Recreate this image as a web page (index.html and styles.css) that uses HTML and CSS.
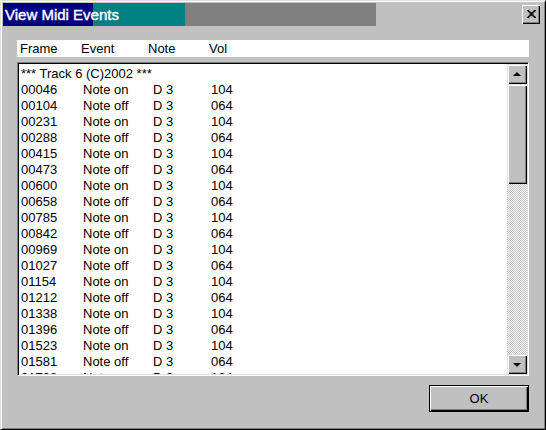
FILE: index.html
```html
<!DOCTYPE html>
<html>
<head>
<meta charset="utf-8">
<link rel="stylesheet" href="styles.css">
</head>
<body>
<div class="window">
  <div class="titlerow">
    <div class="titlebar"><span class="title">View Midi Events</span></div>
    <div class="close">
      <svg width="9" height="8" viewBox="0 0 8 7"><path fill="#000" d="M0 0h2v1h-2z M6 0h2v1h-2z M1 1h2v1h-2z M5 1h2v1h-2z M2 2h4v1h-4z M3 3h2v1h-2z M2 4h4v1h-4z M1 5h2v1h-2z M5 5h2v1h-2z M0 6h2v1h-2z M6 6h2v1h-2z"/></svg>
    </div>
  </div>
  <div class="content">
    <div class="colhead"><span>Frame</span><span>Event</span><span>Note</span><span>Vol</span></div>
    <div class="listbox">
      <div class="rows">
        <div class="row-track">*** Track 6 (C)2002 ***</div>
        <div class="row"><span>00046</span><span>Note on</span><span>D 3</span><span>104</span></div>
        <div class="row"><span>00104</span><span>Note off</span><span>D 3</span><span>064</span></div>
        <div class="row"><span>00231</span><span>Note on</span><span>D 3</span><span>104</span></div>
        <div class="row"><span>00288</span><span>Note off</span><span>D 3</span><span>064</span></div>
        <div class="row"><span>00415</span><span>Note on</span><span>D 3</span><span>104</span></div>
        <div class="row"><span>00473</span><span>Note off</span><span>D 3</span><span>064</span></div>
        <div class="row"><span>00600</span><span>Note on</span><span>D 3</span><span>104</span></div>
        <div class="row"><span>00658</span><span>Note off</span><span>D 3</span><span>064</span></div>
        <div class="row"><span>00785</span><span>Note on</span><span>D 3</span><span>104</span></div>
        <div class="row"><span>00842</span><span>Note off</span><span>D 3</span><span>064</span></div>
        <div class="row"><span>00969</span><span>Note on</span><span>D 3</span><span>104</span></div>
        <div class="row"><span>01027</span><span>Note off</span><span>D 3</span><span>064</span></div>
        <div class="row"><span>01154</span><span>Note on</span><span>D 3</span><span>104</span></div>
        <div class="row"><span>01212</span><span>Note off</span><span>D 3</span><span>064</span></div>
        <div class="row"><span>01338</span><span>Note on</span><span>D 3</span><span>104</span></div>
        <div class="row"><span>01396</span><span>Note off</span><span>D 3</span><span>064</span></div>
        <div class="row"><span>01523</span><span>Note on</span><span>D 3</span><span>104</span></div>
        <div class="row"><span>01581</span><span>Note off</span><span>D 3</span><span>064</span></div>
        <div class="row"><span>01708</span><span>Note on</span><span>D 3</span><span>104</span></div>
      </div>
      <div class="scrollbar">
        <div class="sbtn"><i class="tri-up"></i></div>
        <div class="track"><div class="thumb"></div></div>
        <div class="sbtn"><i class="tri-down"></i></div>
      </div>
    </div>
    <div class="actions"><div class="ok">OK</div></div>
  </div>
</div>
</body>
</html>
```
FILE: styles.css
```css
html, body {
  margin: 0;
  padding: 0;
}
body {
  width: 546px;
  height: 430px;
  background: #c0c0c0;
  font-family: "Liberation Sans", Arial, sans-serif;
  font-size: 13px;
  color: #000;
  overflow: hidden;
}
.window {
  box-sizing: border-box;
  width: 546px;
  height: 430px;
  border: 1px solid;
  border-color: #dfdfdf #000 #000 #dfdfdf;
  box-shadow: inset 1px 1px #fff, inset -1px -1px #808080;
  padding: 2px 3px 3px 2px;
  display: flex;
  flex-direction: column;
}
.titlerow {
  display: flex;
  align-items: center;
  height: 23px;
}
.titlebar {
  width: 373px;
  height: 23px;
  background: linear-gradient(to right, #000080 0 90px, #008080 90px 182px, #808080 182px 373px);
  display: flex;
  align-items: center;
}
.title {
  color: #fff;
  font-size: 15px;
  padding-left: 2px;
  line-height: 23px;
  -webkit-text-stroke: 0.4px #fff;
}
.close {
  margin-left: auto;
  margin-right: 2px;
  box-sizing: border-box;
  width: 18px;
  height: 19px;
  background: #c0c0c0;
  box-shadow: inset 1px 1px #fff, inset -1px -1px #000, inset -2px -2px #808080;
  display: flex;
  align-items: center;
  justify-content: center;
  padding-bottom: 1px;
}
.close svg {
  display: block;
}
.content {
  padding: 0 13px 0 14px;
  display: flex;
  flex-direction: column;
}
.colhead {
  margin-top: 14px;
  height: 17px;
  line-height: 18px;
  background: #fff;
  display: grid;
  grid-template-columns: 61px 67px 61px auto;
  padding-left: 3px;
}
.listbox {
  margin-top: 5px;
  box-sizing: border-box;
  height: 314px;
  border: 1px solid;
  border-color: #808080 #fff #fff #808080;
  box-shadow: inset 1px 1px #000, inset -1px -1px #dfdfdf;
  padding: 1px;
  display: flex;
  background: #fff;
}
.rows {
  flex: 1;
  overflow: hidden;
  padding: 2px 0 0 2px;
}
.row-track,
.row {
  height: 16px;
  line-height: 16px;
  white-space: nowrap;
}
.row {
  display: grid;
  grid-template-columns: 62px 70px 58px auto;
}
.scrollbar {
  width: 20px;
  display: flex;
  flex-direction: column;
}
.sbtn {
  box-sizing: border-box;
  height: 20px;
  background: #c0c0c0;
  box-shadow: inset 1px 1px #dfdfdf, inset 2px 2px #fff, inset -1px -1px #000, inset -2px -2px #808080;
  display: flex;
  align-items: center;
  justify-content: center;
}
.tri-up {
  width: 0;
  height: 0;
  border-left: 4px solid transparent;
  border-right: 4px solid transparent;
  border-bottom: 4px solid #000;
  margin-top: -1px;
}
.tri-down {
  width: 0;
  height: 0;
  border-left: 4px solid transparent;
  border-right: 4px solid transparent;
  border-top: 4px solid #000;
  margin-top: 1px;
}
.track {
  flex: 1;
  background: repeating-conic-gradient(#c0c0c0 0% 25%, #fff 0% 50%) 0 0 / 2px 2px;
}
.thumb {
  box-sizing: border-box;
  height: 100px;
  background: #c0c0c0;
  box-shadow: inset 1px 1px #dfdfdf, inset 2px 2px #fff, inset -1px -1px #000, inset -2px -2px #808080;
}
.actions {
  margin-top: 9px;
  display: flex;
  justify-content: flex-end;
}
.ok {
  box-sizing: border-box;
  width: 100px;
  height: 27px;
  border: 1px solid #000;
  background: #c0c0c0;
  box-shadow: inset 1px 1px #fff, inset -1px -1px #000, inset -2px -2px #808080;
  display: flex;
  align-items: center;
  justify-content: center;
  font-size: 13px;
}
```
